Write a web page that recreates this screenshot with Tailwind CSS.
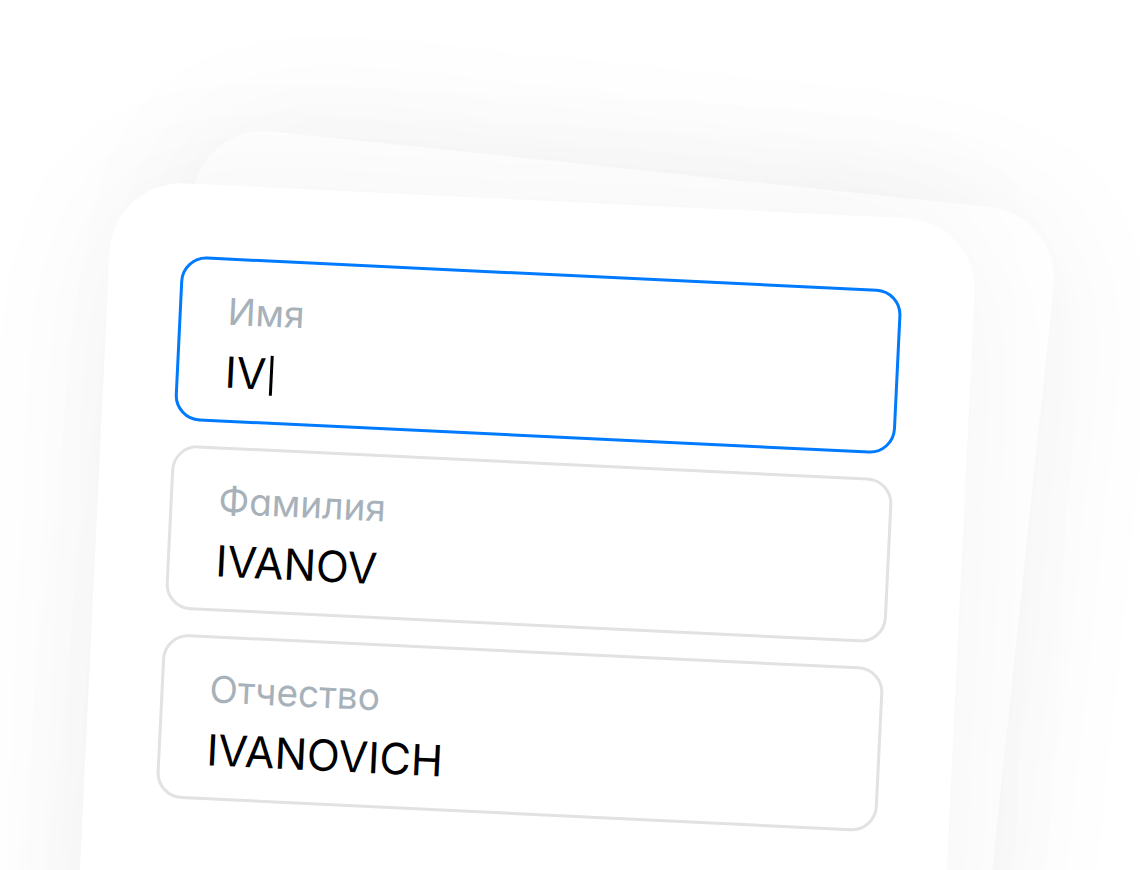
<!DOCTYPE html>
<html lang="ru">

<head>
  <meta charset="utf-8">
  <title>Данные клиента</title>
  <meta name="viewport" content="width=device-width, initial-scale=1.0">
  <script src="https://cdn.jsdelivr.net/npm/@tailwindcss/browser@4"></script>
</head>

<body class="bg-white text-black font-['Inter','Noto_Sans',sans-serif]">

  <main class="h-screen overflow-hidden pt-[180px] pl-[113px] pr-[161px]">
    <div class="relative h-full min-h-[900px]">

      <!-- Back sheet of the stack -->
      <div class="absolute -top-14 left-[87px] w-full h-[1100px] origin-top-left rotate-[6deg] rounded-[72px] bg-white shadow-[0_0_150px_rgb(0_0_0/0.05)]"></div>

      <!-- Front sheet with the form -->
      <form class="relative flex flex-col gap-6 h-full p-[72px] origin-top-left rotate-[2.75deg] rounded-[72px] bg-white shadow-[0_0_150px_rgb(0_0_0/0.05)]">

        <div class="flex flex-col gap-3 px-[46px] pt-[31px] pb-5 border-3 border-[#007aff] rounded-[26px]">
          <label for="firstName" class="text-[37px] leading-10 text-[#a7b1b9] [font-feature-settings:'cv11']">Имя</label>
          <div class="relative">
            <input id="firstName" type="text" value="IV" class="block w-full h-14 text-[43px] outline-none caret-transparent">
            <span class="absolute left-[45px] top-[10px] w-[3px] h-10 bg-black"></span>
          </div>
        </div>

        <div class="flex flex-col gap-3 px-[46px] pt-[31px] pb-5 border-3 border-[#e2e2e3] rounded-[26px]">
          <label for="lastName" class="text-[37px] leading-10 text-[#a7b1b9] [font-feature-settings:'cv11']">Фамилия</label>
          <input id="lastName" type="text" value="IVANOV" class="block w-full h-14 text-[43px] outline-none">
        </div>

        <div class="flex flex-col gap-3 px-[46px] pt-[31px] pb-5 border-3 border-[#e2e2e3] rounded-[26px]">
          <label for="middleName" class="text-[37px] leading-10 text-[#a7b1b9] [font-feature-settings:'cv11']">Отчество</label>
          <input id="middleName" type="text" value="IVANOVICH" class="block w-full h-14 text-[43px] outline-none">
        </div>

      </form>
    </div>
  </main>

</body>
</html>
